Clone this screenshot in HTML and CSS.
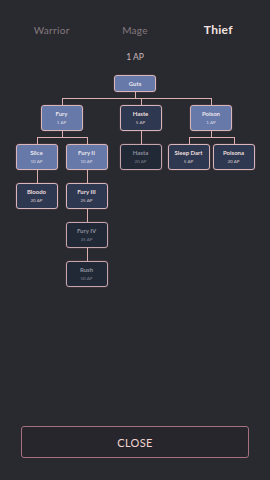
FILE: index.html
```html
<!DOCTYPE html>
<html lang="en">
<head>
    <meta charset="UTF-8">
    <meta name="viewport" content="width=device-width, initial-scale=1.0">
    <title>Skill Tree</title>
    <link rel="stylesheet" href="styles.css">
</head>
<body>
    <div class="screen">
        <!-- class tabs -->
        <nav class="tabs">
            <span class="tab">Warrior</span>
            <span class="tab">Mage</span>
            <span class="tab active">Thief</span>
        </nav>

        <div class="points">1 AP</div>

        <!-- skill tree -->
        <div class="tree">
            <ul class="root">
                <li>
                    <div class="node bought single"><span class="nm">Guts</span></div>
                    <ul class="kids">
                        <li>
                            <div class="node bought"><span class="nm">Fury</span><span class="ap">1 AP</span></div>
                            <ul class="kids">
                                <li>
                                    <div class="node bought"><span class="nm">Slice</span><span class="ap">10 AP</span></div>
                                    <ul class="kids">
                                        <li><div class="node avail"><span class="nm">Bloodo</span><span class="ap">20 AP</span></div></li>
                                    </ul>
                                </li>
                                <li>
                                    <div class="node bought"><span class="nm">Fury II</span><span class="ap">10 AP</span></div>
                                    <ul class="kids">
                                        <li>
                                            <div class="node avail"><span class="nm">Fury III</span><span class="ap">25 AP</span></div>
                                            <ul class="kids">
                                                <li>
                                                    <div class="node locked"><span class="nm">Fury IV</span><span class="ap">35 AP</span></div>
                                                    <ul class="kids">
                                                        <li><div class="node locked"><span class="nm">Rush</span><span class="ap">50 AP</span></div></li>
                                                    </ul>
                                                </li>
                                            </ul>
                                        </li>
                                    </ul>
                                </li>
                            </ul>
                        </li>
                        <li class="nudge">
                            <div class="node avail"><span class="nm">Haste</span><span class="ap">5 AP</span></div>
                            <ul class="kids">
                                <li><div class="node locked"><span class="nm">Hasta</span><span class="ap">20 AP</span></div></li>
                            </ul>
                        </li>
                        <li>
                            <div class="node bought"><span class="nm">Poison</span><span class="ap">1 AP</span></div>
                            <ul class="kids tight">
                                <li><div class="node avail"><span class="nm">Sleep Dart</span><span class="ap">5 AP</span></div></li>
                                <li><div class="node avail"><span class="nm">Poisona</span><span class="ap">20 AP</span></div></li>
                            </ul>
                        </li>
                    </ul>
                </li>
            </ul>
        </div>

        <button class="close">CLOSE</button>
    </div>
</body>
</html>
```

FILE: styles.css
```css
html,body{
    margin: 0;
    padding: 0;
}
body{
    background: #292a30;
    font-family: Lato, "Noto Sans", sans-serif;
    color: #e6dada;
}
.screen{
    display: flex;
    flex-direction: column;
    width: 270px;
    height: 480px;
}

/* tabs */
.tabs{
    display: flex;
    padding: 23px 10px 0;
}
.tab{
    flex: 1;
    text-align: center;
    font-size: 10px;
    line-height: 14px;
    letter-spacing: .3px;
    color: #85797d;
}
.tab.active{
    font-size: 12px;
    font-weight: 700;
    color: #f5e2e0;
}

.points{
    margin-top: 14px;
    text-align: center;
    font-size: 8.5px;
    line-height: 12px;
    color: #c9b9bb;
}

/* tree */
.tree{
    display: flex;
    justify-content: center;
    margin-top: 12px;
}
.tree ul{
    list-style: none;
    margin: 0;
    padding: 0;
    display: flex;
    justify-content: center;
}
.tree li{
    position: relative;
    display: flex;
    flex-direction: column;
    align-items: center;
    padding: 0 4px;
}
/* nested rows: cancel the li padding so it doesn't add up */
.tree .kids{
    position: relative;
    margin: 0 -4px;
    padding-top: 6px;
}
.tree .kids.tight{
    margin: 0 -1.5px;
}
/* line down from parent */
.kids::before{
    content: '';
    position: absolute;
    top: 0;
    left: 50%;
    height: 7px;
    border-left: 1.5px solid #dcb0b0;
}
.tree .kids > li{
    padding-top: 7px;
}
.tree .kids.tight > li{
    padding: 7px 1.5px 0;
}
.tree .kids > li.nudge{
    padding: 7px 2px 0 8px;
}
/* horizontal halves */
.kids > li::before,
.kids > li::after{
    content: '';
    position: absolute;
    top: 0;
    width: 50%;
    border-top: 1.5px solid #dcb0b0;
}
.kids > li::before{
    left: 0;
}
.kids > li::after{
    left: 50%;
}
.kids > li:first-child::before,
.kids > li:last-child::after{
    border: 0;
}
/* drop into each box, at its own centre */
.kids > li > .node::before{
    content: '';
    position: absolute;
    top: -8px;
    left: 50%;
    height: 7px;
    border-left: 1.5px solid #dcb0b0;
}

/* nodes */
.node{
    position: relative;
    box-sizing: border-box;
    min-width: 42px;
    height: 26px;
    padding: 0 3px;
    display: flex;
    flex-direction: column;
    align-items: center;
    justify-content: center;
    gap: 3px;
    border: 1px solid #d8b6ba;
    border-radius: 3px;
    box-shadow: 0 0 0 .5px #4a3a40;
    white-space: nowrap;
}
.node.single{
    height: 17px;
}
.nm{
    font-size: 6px;
    font-weight: 700;
    line-height: 7px;
}
.ap{
    font-size: 4.5px;
    line-height: 6px;
    opacity: .85;
}
.bought{
    background: #6679a9;
    color: #ece6ee;
}
.avail{
    background: #2e3951;
    color: #ecdede;
}
.locked{
    background: #212937;
    color: #8d909c;
    border-color: #c4a6ac;
}

/* close button */
.close{
    margin: auto 21px 22px;
    height: 32px;
    background: #26262c;
    border: 1.5px solid #a8707e;
    border-radius: 3px;
    color: #f2d4d2;
    font-family: Lato, "Noto Sans", sans-serif;
    font-size: 11px;
    letter-spacing: .3px;
}
```
